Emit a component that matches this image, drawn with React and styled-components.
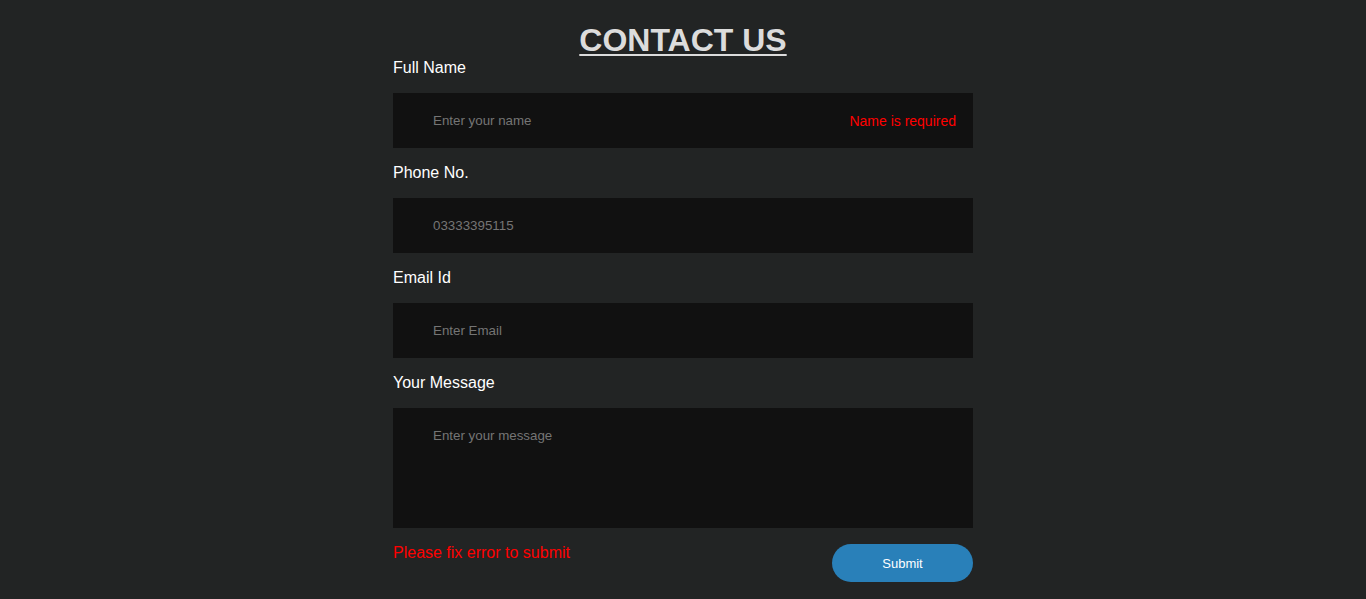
import React from 'react'
import styled, { createGlobalStyle } from 'styled-components'

const GlobalStyle = createGlobalStyle`
  html, body {
    margin: 0;
    padding: 0;
    background: #222424;
    font-family: "Liberation Sans", Arial, sans-serif;
  }
`

const App = () => {
  return (
    <>
      <GlobalStyle />
      <Page>
        <Form onSubmit={(e) => e.preventDefault()}>
          <Title>CONTACT US</Title>

          <Label htmlFor="name">Full Name</Label>
          <Field>
            <Input id="name" type="text" placeholder="Enter your name" />
            <FieldError>Name is required</FieldError>
          </Field>

          <Label htmlFor="phone">Phone No.</Label>
          <Field>
            <Input id="phone" type="text" placeholder="03333395115" />
          </Field>

          <Label htmlFor="email">Email Id</Label>
          <Field>
            <Input id="email" type="email" placeholder="Enter Email" />
          </Field>

          <Label htmlFor="message">Your Message</Label>
          <Field>
            <TextArea id="message" placeholder="Enter your message" />
          </Field>

          <Footer>
            <FormError>Please fix error to submit</FormError>
            <SubmitButton type="submit">Submit</SubmitButton>
          </Footer>
        </Form>
      </Page>
    </>
  )
}

export default App

const Page = styled.div`
  display: flex;
  justify-content: center;
  padding-top: 22px;
  min-height: 577px;
`

const Form = styled.form`
  width: 580px;
  display: flex;
  flex-direction: column;
`

const Title = styled.h1`
  margin: 0;
  text-align: center;
  font-size: 32px;
  line-height: 36px;
  font-weight: 700;
  color: #dcdcdc;
  text-decoration: underline;
  text-decoration-thickness: 2px;
  text-underline-offset: 3px;
`

const Label = styled.label`
  display: block;
  font-size: 16px;
  line-height: 18px;
  color: #fff;
  margin-top: 1px;
  margin-bottom: 16px;
`

const Field = styled.div`
  position: relative;
  margin-bottom: 15px;
`

const inputBase = `
  display: block;
  width: 100%;
  box-sizing: border-box;
  border: none;
  outline: none;
  background: #111111;
  color: #ddd;
  font-family: "Liberation Sans", Arial, sans-serif;
  font-size: 13.33px;
  padding: 0 40px;
  &::placeholder {
    color: #757575;
  }
`

const Input = styled.input`
  ${inputBase}
  height: 55px;
`

const TextArea = styled.textarea`
  ${inputBase}
  height: 120px;
  padding-top: 20px;
  resize: none;
`

const FieldError = styled.span`
  position: absolute;
  right: 17px;
  top: 50%;
  transform: translateY(-50%);
  font-size: 14px;
  color: #ff0000;
`

const Footer = styled.div`
  display: flex;
  justify-content: space-between;
  align-items: flex-start;
  margin-top: 1px;
`

const FormError = styled.p`
  margin: 0;
  font-size: 16px;
  line-height: 18px;
  color: #ff0000;
`

const SubmitButton = styled.button`
  width: 141px;
  height: 38px;
  border: none;
  border-radius: 19px;
  background: #2980b9;
  color: #fff;
  font-family: "Liberation Sans", Arial, sans-serif;
  font-size: 13px;
  cursor: pointer;
`
